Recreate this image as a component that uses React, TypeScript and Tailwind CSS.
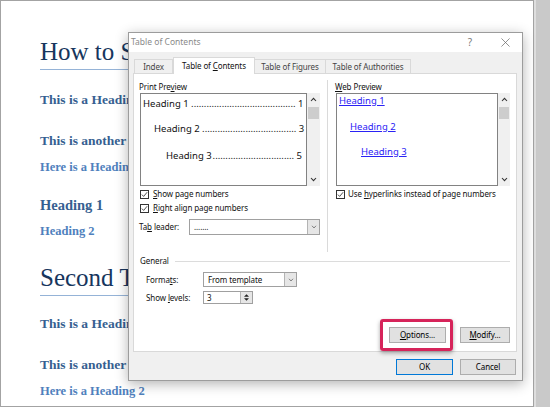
import clsx from 'clsx'

const ui = "font-['Noto_Sans','Liberation_Sans',sans-serif]"

function Acc({ children }: { children: string }) {
  return <span className="underline underline-offset-[1px]">{children}</span>
}

function Check() {
  return (
    <span className="flex h-[9px] w-[9px] shrink-0 items-center justify-center border border-[#333] bg-white">
      <svg viewBox="0 0 8 8" className="h-[7px] w-[7px]">
        <path d="M1 4.1 L3 6.2 L7 1.4" fill="none" stroke="#222" strokeWidth="0.9" />
      </svg>
    </span>
  )
}

function Chevron({ up }: { up?: boolean }) {
  return (
    <svg viewBox="0 0 7 5" className="h-[5px] w-[7px]">
      <path d={up ? 'M1 4 L3.5 1.3 L6 4' : 'M1 1 L3.5 3.7 L6 1'} fill="none" stroke="#333" strokeWidth="1.1" />
    </svg>
  )
}

function Scrollbar({ width }: { width: string }) {
  return (
    <div className={clsx('flex h-full flex-col bg-[#f0f0f0]', width)}>
      <div className="flex h-[13px] items-center justify-center">
        <Chevron up />
      </div>
      <div className="mx-[1px] mt-[1px] h-[12px] bg-[#cdcdcd]" />
      <div className="flex-1" />
      <div className="flex h-[13px] items-center justify-center">
        <Chevron />
      </div>
    </div>
  )
}

function Select({ value, className }: { value: string; className?: string }) {
  return (
    <div className={clsx('flex h-full items-stretch border border-[#a0a0a0] bg-white', className)}>
      <span className="flex flex-1 items-center pl-[4px]">{value}</span>
      <span className="flex w-[12px] items-center justify-center border-l border-[#b4b4b4] bg-[#e6e6e6]">
        <svg viewBox="0 0 7 5" className="h-[4px] w-[6px]">
          <path d="M1 1 L3.5 3.7 L6 1" fill="none" stroke="#555" strokeWidth="0.9" />
        </svg>
      </span>
    </div>
  )
}

function TocLine({ title, page, dots, indent }: { title: string; page: string; dots: number; indent: string }) {
  return (
    <div className={clsx('flex h-[13px] items-center whitespace-pre pr-[4px] leading-[13px]', indent)}>
      <span>{title}</span>
      <span className="flex flex-1 justify-end">{'.'.repeat(dots)}</span>
      <span>{' ' + page}</span>
    </div>
  )
}

function Button({ children, className }: { children: React.ReactNode; className?: string }) {
  return (
    <div className={clsx('flex h-[16px] items-center justify-center border bg-[#e1e1e1] text-black', className)}>
      {children}
    </div>
  )
}

function Page() {
  return (
    <div className="flex h-[407px] w-[534px] shrink-0 flex-col whitespace-nowrap border border-[#a3a3a3] bg-white pl-[39px] pt-[36px] font-['Liberation_Serif',serif]">
      <div className="w-[430px] border-b border-[#95b3d7] pb-[2px] text-[25px] leading-[30px] text-[#17365d]">
        How to Set Up Your Document
      </div>
      <div className="mt-[21px] text-[13.5px] font-bold leading-[18px] text-[#365f91]">This is a Heading 1</div>
      <div className="mt-[23px] text-[13.5px] font-bold leading-[18px] text-[#365f91]">This is another Heading 1</div>
      <div className="mt-[9px] text-[12.5px] font-bold leading-[16px] text-[#4f81bd]">Here is a Heading 2</div>
      <div className="mt-[21px] text-[14.5px] font-bold leading-[18px] text-[#365f91]">Heading 1</div>
      <div className="mt-[9px] text-[12.5px] font-bold leading-[16px] text-[#4f81bd]">Heading 2</div>
      <div className="mt-[24px] w-[430px] border-b border-[#95b3d7] pb-[2px] text-[25px] leading-[30px] text-[#17365d]">
        Second Topic
      </div>
      <div className="mt-[19px] text-[13.5px] font-bold leading-[18px] text-[#365f91]">This is a Heading 1</div>
      <div className="mt-[23px] text-[13.5px] font-bold leading-[18px] text-[#365f91]">This is another Heading 1</div>
      <div className="mt-[9px] text-[12.5px] font-bold leading-[16px] text-[#4f81bd]">Here is a Heading 2</div>
    </div>
  )
}

function Dialog() {
  return (
    <div
      className={clsx(
        'absolute left-[128px] top-[32px] flex h-[349px] w-[395px] flex-col border border-[#9c9c9c] bg-[#f0f0f0] text-[8px] tracking-[-0.1px] text-[#111] shadow-[0_3px_12px_rgba(0,0,0,0.3)]',
        ui,
      )}
    >
      {/* title bar */}
      <div className="flex h-[19px] items-center bg-white pl-[2px] pr-[7px] tracking-normal">
        <span className="text-[8.5px] text-[#8a8a8a]">Table of Contents</span>
        <div className="ml-auto flex gap-[15px]">
          <span className="w-[20px] text-center text-[10px] text-[#7a7a7a]">?</span>
          <span className="flex w-[20px] items-center justify-center">
            <svg viewBox="0 0 10 10" className="h-[9px] w-[9px]">
              <path d="M0.5 0.5 L9.5 9.5 M9.5 0.5 L0.5 9.5" stroke="#666" strokeWidth="0.8" />
            </svg>
          </span>
        </div>
      </div>

      {/* tabs */}
      <div className="mt-[5px] flex h-[16px] items-end pl-[5px]">
        <div className="flex h-[14px] w-[39px] items-center justify-center border border-b-0 border-[#d9d9d9] text-[#444]">
          <span>Index</span>
        </div>
        <div className="relative z-10 -mb-px flex h-[17px] w-[82px] items-center justify-center border border-b-0 border-[#d9d9d9] bg-white pb-[1px]">
          <span>
            Table of <Acc>C</Acc>ontents
          </span>
        </div>
        <div className="flex h-[14px] w-[71px] items-center justify-center border border-b-0 border-l-0 border-[#d9d9d9] text-[#444]">
          <span>Table of Figures</span>
        </div>
        <div className="flex h-[14px] w-[85px] items-center justify-center border border-b-0 border-l-0 border-[#d9d9d9] text-[#444]">
          <span>Table of Authorities</span>
        </div>
      </div>

      {/* panel */}
      <div className="ml-[4px] flex h-[279px] w-[384px] flex-col border border-[#d9d9d9] bg-white">
        <div className="flex h-[179px] items-start pl-[5px]">
          {/* print preview */}
          <div className="flex w-[181px] flex-col pt-[7px]">
            <div className="h-[12px] leading-[12px]">
              Print Pre<Acc>v</Acc>iew
            </div>
            <div className="flex h-[93px]">
              <div className="ml-[1px] flex w-[167px] flex-col border border-[#828282] pl-[1px] pt-[3px] text-[9.5px] tracking-normal">
                <TocLine title="Heading 1 " page="1" dots={41} indent="pl-[1px]" />
                <div className="mt-[12px]">
                  <TocLine title="Heading 2 " page="3" dots={37} indent="pl-[12px]" />
                </div>
                <div className="mt-[14px]">
                  <TocLine title="Heading 3" page="5" dots={32} indent="pl-[24px]" />
                </div>
              </div>
              <Scrollbar width="w-[13px]" />
            </div>
            <div className="mt-[2px] flex h-[12px] items-center gap-[4px] pl-[1px]">
              <Check />
              <span>
                <Acc>S</Acc>how page numbers
              </span>
            </div>
            <div className="mt-[2px] flex h-[12px] items-center gap-[4px] pl-[1px]">
              <Check />
              <span>
                <Acc>R</Acc>ight align page numbers
              </span>
            </div>
            <div className="mt-[5px] flex h-[16px] items-center">
              <span className="w-[50px]">
                Ta<Acc>b</Acc> leader:
              </span>
              <Select value="......." className="w-[131px]" />
            </div>
          </div>

          <div className="ml-[7px] mt-[6px] h-[172px] w-px bg-[#dadada]" />

          {/* web preview */}
          <div className="ml-[7px] flex w-[175px] flex-col pt-[7px]">
            <div className="h-[12px] leading-[12px]">
              <Acc>W</Acc>eb Preview
            </div>
            <div className="flex h-[93px]">
              <div className="ml-[1px] flex w-[162px] flex-col items-start border border-[#828282] pl-[1px] text-[9.5px] leading-[13px] tracking-normal text-[#2a22f5]">
                <span className="ml-[1px] underline">Heading 1</span>
                <span className="ml-[12px] mt-[13px] underline">Heading 2</span>
                <span className="ml-[23px] mt-[12px] underline">Heading 3</span>
              </div>
              <Scrollbar width="w-[12px]" />
            </div>
            <div className="mt-[2px] flex h-[12px] items-center gap-[3px] pl-[1px]">
              <Check />
              <span>
                Use <Acc>h</Acc>yperlinks instead of page numbers
              </span>
            </div>
          </div>
        </div>

        {/* general */}
        <div className="mt-[2px] flex h-[12px] items-center pl-[6px] pr-[6px]">
          <span>General</span>
          <div className="ml-[6px] h-px flex-1 bg-[#dcdcdc]" />
        </div>
        <div className="mt-[5px] flex h-[15px] items-center pl-[12px]">
          <span className="w-[57px]">
            Forma<Acc>t</Acc>s:
          </span>
          <Select value="From template" className="w-[94px]" />
        </div>
        <div className="mt-[4px] flex h-[13px] items-center pl-[12px]">
          <span className="w-[57px]">
            Show <Acc>l</Acc>evels:
          </span>
          <div className="flex h-full w-[50px] border border-[#a0a0a0] bg-white">
            <span className="flex flex-1 items-center pl-[3px]">3</span>
            <span className="flex w-[12px] flex-col items-center justify-center gap-[1px] border-l border-[#b4b4b4] bg-[#e6e6e6]">
              <svg viewBox="0 0 6 3" className="h-[3px] w-[5px]">
                <path d="M0 3 L3 0 L6 3 Z" fill="#222" />
              </svg>
              <svg viewBox="0 0 6 3" className="h-[3px] w-[5px]">
                <path d="M0 0 L3 3 L6 0 Z" fill="#222" />
              </svg>
            </span>
          </div>
        </div>
        <div className="mt-[23px] flex justify-end gap-[14px] pr-[6px]">
          <Button className="w-[57px] border-[#adadad]">
            <span>
              <Acc>O</Acc>ptions...
            </span>
          </Button>
          <Button className="w-[50px] border-[#adadad]">
            <span>
              <Acc>M</Acc>odify...
            </span>
          </Button>
        </div>
      </div>

      {/* ok / cancel */}
      <div className="mt-[7px] flex justify-end gap-[7px] pr-[6px]">
        <Button className="w-[57px] border-[#0078d7]">OK</Button>
        <Button className="w-[56px] border-[#adadad]">Cancel</Button>
      </div>
    </div>
  )
}

export default function App() {
  return (
    <div className="relative flex h-[407px] w-[550px] overflow-hidden bg-[#c9c9c9]">
      <Page />
      <div className="h-full flex-1 border-l-2 border-[#dedede] bg-[#c9c9c9]" />
      <Dialog />
      {/* highlight around Options button */}
      <div className="absolute left-[380px] top-[319px] h-[32px] w-[73px] rounded-[3px] border-[3px] border-[#d6245a] shadow-[0_2px_4px_rgba(0,0,0,0.35)]" />
    </div>
  )
}
